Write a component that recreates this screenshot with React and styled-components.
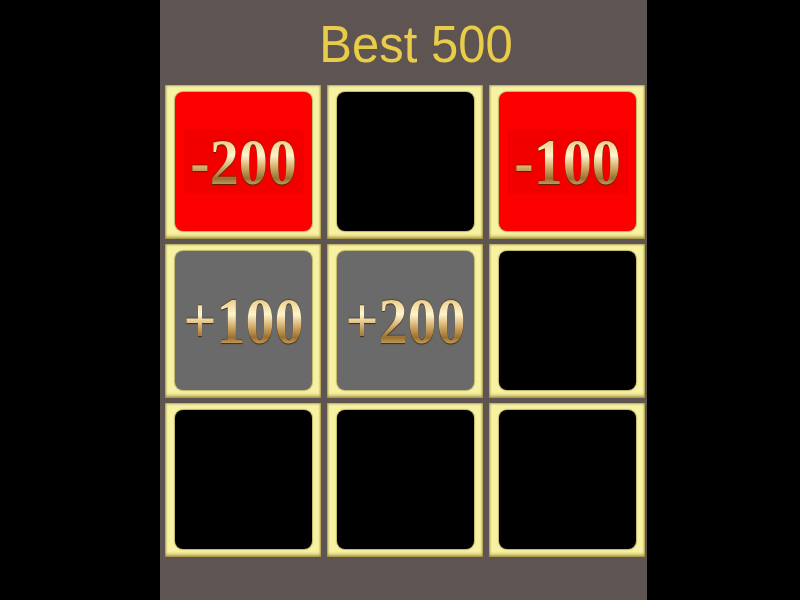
import React from 'react'
import styled, { createGlobalStyle } from 'styled-components'

const cells = [
  { tone: 'red', value: '-200' },
  { tone: 'empty' },
  { tone: 'red', value: '-100' },
  { tone: 'grey', value: '+100' },
  { tone: 'grey', value: '+200' },
  { tone: 'empty' },
  { tone: 'empty' },
  { tone: 'empty' },
  { tone: 'empty' },
]

const fills = {
  red: '#fd0000',
  grey: '#6a6a6a',
  empty: '#000000',
}

export default function App() {
  return (
    <>
      <GlobalStyle />
      <Board>
        <Title>Best 500</Title>
        <Grid>
          {cells.map((cell, index) => (
            <Tile key={index}>
              <Cell tone={cell.tone}>
                {cell.value && (
                  <Label tone={cell.tone}>
                    <Number>{cell.value}</Number>
                  </Label>
                )}
              </Cell>
            </Tile>
          ))}
        </Grid>
      </Board>
    </>
  )
}

const GlobalStyle = createGlobalStyle`
  html, body {
    margin: 0;
    height: 100%;
    background: #000;
  }
  #root {
    height: 100%;
  }
`

const Board = styled.main`
  width: 487px;
  height: 600px;
  margin-left: 160px;
  background: #5e5452;
  display: flex;
  flex-direction: column;
  box-sizing: border-box;
  padding: 0 2px 0 5px;
`

const Title = styled.h1`
  margin: 0;
  height: 85px;
  display: flex;
  align-items: center;
  justify-content: center;
  padding-left: 22px;
  padding-top: 2px;
  box-sizing: border-box;
  font-family: 'Liberation Sans', Arial, sans-serif;
  font-weight: 400;
  font-size: 49px;
  color: #e9cd48;
  transform: scaleY(1.06);
`

const Grid = styled.section`
  display: grid;
  grid-template-columns: repeat(3, 156px);
  grid-template-rows: repeat(3, 154px);
  column-gap: 6px;
  row-gap: 5px;
`

const Tile = styled.div`
  background: #f7f1a2;
  box-shadow: inset 0 0 2px 1px rgba(120, 100, 30, 0.55),
    inset 0 -3px 3px rgba(150, 125, 40, 0.45);
  padding: 7px 9px 8px 10px;
  display: flex;
`

const Cell = styled.div`
  flex: 1;
  border-radius: 8px;
  background: ${({ tone }) => fills[tone]};
  box-shadow: 0 0 1px 1px rgba(90, 70, 10, 0.35);
  display: flex;
  align-items: center;
  justify-content: center;
`

const Label = styled.div`
  display: flex;
  align-items: center;
  justify-content: center;
  width: 120px;
  height: 64px;
  background: ${({ tone }) =>
    tone === 'red' ? 'rgba(150, 0, 0, 0.1)' : 'transparent'};
`

const Number = styled.span`
  font-family: 'Liberation Serif', 'Times New Roman', serif;
  font-size: 58px;
  font-weight: 700;
  line-height: 1;
  display: inline-block;
  transform: scaleY(1.14);
  background: linear-gradient(
    180deg,
    #a07a38 0%,
    #efd699 22%,
    #fff4cc 40%,
    #d4ad6a 58%,
    #9a7030 75%,
    #e2c284 92%,
    #b08844 100%
  );
  -webkit-background-clip: text;
  background-clip: text;
  color: transparent;
  filter: drop-shadow(0 1px 0 rgba(70, 40, 5, 0.8))
    drop-shadow(0 -1px 0 rgba(70, 40, 5, 0.45));
`
